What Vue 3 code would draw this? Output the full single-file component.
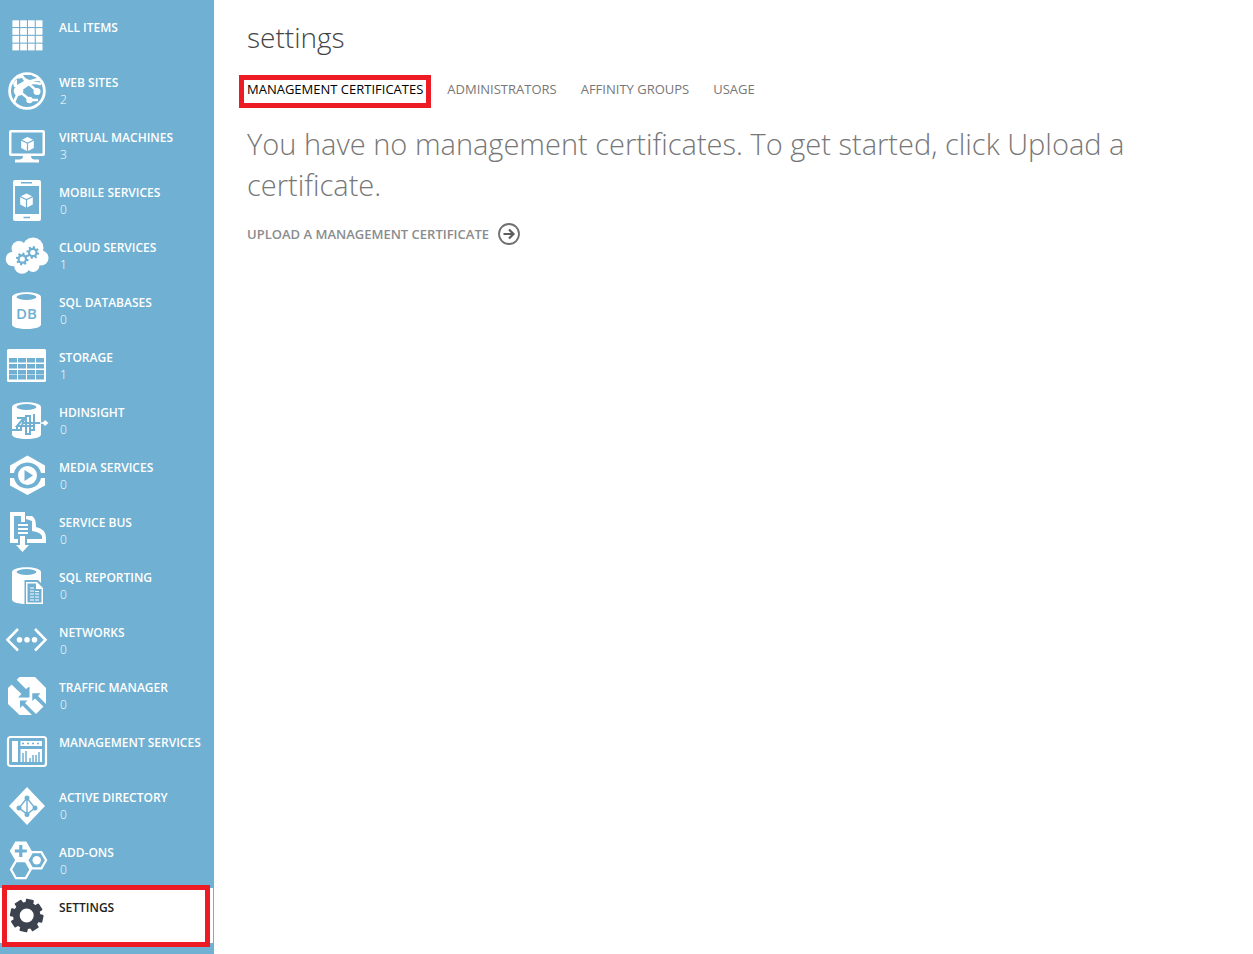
<script setup>
const B = '#70b0d2'
const cube = (x, y) =>
  `<g transform="translate(${x} ${y})"><path d="M0-7 5.6-4.2 0-1.4-5.6-4.2Z"/><path d="M-6.3-3.2-.6-.4V6.9L-6.3 4Z"/><path d="M6.3-3.2.6-.4V6.9L6.3 4Z"/></g>`
const teeth = (n, r, w, h) =>
  Array.from({ length: n }, (_, i) => `<rect x="${-w / 2}" y="${-r}" width="${w}" height="${h}" rx="${w / 8}" transform="rotate(${(i * 360) / n + 12})"/>`).join('')
const smallGear = (x, y) =>
  `<g transform="translate(${x} ${y})" fill="${B}">${teeth(8, 6.4, 2.2, 3)}<circle r="3.7" fill="none" stroke="${B}" stroke-width="2.2"/></g>`
const grid = [0, 1, 2, 3]
  .map((r) => [0, 1, 2, 3].map((c) => `<rect x="${7.4 + c * 7.8}" y="${6.3 + r * 7.8}" width="6.7" height="6.7"/>`).join(''))
  .join('')
const drum = `<path d="M7 8C7 1.500 36 1.500 36 8V35.500C36 41.500 7 41.500 7 35.500Z"/><ellipse cx="21.500" cy="8" rx="10" ry="2.900" fill="${B}"/>`
const hex = (x, y, r) =>
  [0, 60, 120, 180, 240, 300].map((a) => `${(x + r * Math.cos((a * Math.PI) / 180)).toFixed(1)},${(y + r * Math.sin((a * Math.PI) / 180)).toFixed(1)}`).join(' ')

const items = [
  { label: 'ALL ITEMS', icon: grid },
  {
    label: 'WEB SITES',
    count: 2,
    icon: `<circle cx="22" cy="22" r="17.400" fill="none" stroke="currentColor" stroke-width="2.800"/>
      <path fill="none" stroke="currentColor" stroke-width="2.600" d="M14 22 32 9M14 22 25 31M17 7Q23 15 32 22M14 22 9 33M25 31 33 31M36 15Q24 12 15 18"/>
      <path d="M17 5 32 7 35 12 23 13 16 18 9 18 8 14Z" /><path fill="${B}" d="M18 6Q20 10 25 11L32 9 26 6ZM12 10 17 9 19 12 12 16Z"/>
      <circle cx="13.500" cy="22" r="4.800"/><circle cx="32" cy="22.500" r="3.500"/><circle cx="24.500" cy="31" r="3.200"/>`
  },
  {
    label: 'VIRTUAL MACHINES',
    count: 3,
    icon: `<path fill-rule="evenodd" d="M6 6H38Q40 6 40 8V30Q40 32 38 32H6Q4 32 4 30V8Q4 6 6 6ZM6.500 8.500V29.500H37.500V8.500Z"/><path d="M18 32H26Q26 35.500 30 35.500H34V38.500H10V35.500H14Q18 35.500 18 32Z"/>${cube(22.5, 20)}`
  },
  {
    label: 'MOBILE SERVICES',
    count: 0,
    icon: `<path fill-rule="evenodd" d="M10 1H34Q36 1 36 3V40Q36 42 34 42H10Q8 42 8 40V3Q8 1 10 1ZM10 7V35H34V7Z"/><path stroke="${B}" stroke-width="1.600" d="M16 3.800H27M18.500 38.500H25"/>${cube(21.5, 21.5)}`
  },
  {
    label: 'CLOUD SERVICES',
    count: 1,
    icon: `<circle cx="28" cy="14" r="10.500"/><circle cx="14" cy="14.500" r="7.500"/><circle cx="8" cy="25" r="7.300"/><circle cx="17" cy="32" r="7.800"/><circle cx="28" cy="31.500" r="6.500"/><circle cx="36" cy="24" r="7.500"/><path d="M8 18H36V31H8Z"/>${smallGear(17.3, 25)}${smallGear(27.8, 18.5)}`
  },
  {
    label: 'SQL DATABASES',
    count: 0,
    icon: `${drum}<text x="21.500" y="30" fill="${B}" text-anchor="middle" font-size="15" font-weight="600">DB</text>`
  },
  {
    label: 'STORAGE',
    count: 1,
    icon: `<rect x="2" y="5" width="39" height="33" rx="1.500"/><path fill="${B}" d="${[14, 20, 26, 31].map((y) => [4, 13, 22, 31].map((x) => `M${x} ${y}h8v4.500h-8z`).join('')).join('')}"/>`
  },
  {
    label: 'HDINSIGHT',
    count: 0,
    icon: `${drum}<path fill="none" stroke="${B}" stroke-width="2" d="M7 31H16V27H29V31H25V35H21V17H25V31M12 19H19L12 27H17M20 18 16 29M29 15V27M12 31V27M36 24H17"/><path stroke="currentColor" stroke-width="1.600" d="M35 24H40"/><path d="M40 21 43.500 24 40 27 37.500 24Z"/>`
  },
  {
    label: 'MEDIA SERVICES',
    count: 0,
    icon: `<path d="M22.500 1.500 40 11.500V19H36C33 5 12 5 9 19H5V11.500ZM5 24H9C12 38 33 38 36 24H40V31.500L22.500 41 5 31.500Z"/><path fill-rule="evenodd" d="M22.500 12A9.500 9.500 0 1 0 22.500 31 9.500 9.500 0 1 0 22.500 12ZM19.500 16 28 21.500 19.500 27Z"/>`
  },
  {
    label: 'SERVICE BUS',
    count: 0,
    icon: `<path fill="none" stroke="currentColor" stroke-width="4" d="M13 32H7V5H18V13"/><path fill-rule="evenodd" d="M21 7H27Q31 9 31 18Q41 20 41 29V34H22V30H37V27Q35 23 27 22V12L21 10Z"/><path d="M13 15H23V17H13ZM13 19H23V21H13ZM13 23H23V25H13ZM15 27H20V36H24L17.500 43 11 36H15Z"/>`
  },
  {
    label: 'SQL REPORTING',
    count: 0,
    icon: `${drum}<path fill="${B}" d="M19.500 16H33L39 22V41H19.500Z"/><path fill-rule="evenodd" d="M21 18H32L38 24V40H21ZM22.500 19.500V38.500H36.500V25H31V19.500Z"/><path stroke="currentColor" stroke-width="1.200" d="M25 24H29M25 27H29M25 30H29M25 33H29M25 36H29M30 27.500H34M30 30H34M30 33H34M30 36H34"/>`
  },
  {
    label: 'NETWORKS',
    count: 0,
    icon: `<path fill="none" stroke="currentColor" stroke-width="2.600" d="M13 10 2.500 20.800 13 31.500M30 10 40.500 20.800 30 31.500"/><circle cx="14.500" cy="20.800" r="2.800"/><circle cx="22" cy="20.800" r="2.800"/><circle cx="29.500" cy="20.800" r="2.800"/>`
  },
  {
    label: 'TRAFFIC MANAGER',
    count: 0,
    icon: `<path d="M14.500 3H30L41 14V30L30 41H14.500L3 30V14Z"/><path fill="${B}" d="M6 10 11 5 21 15 24.500 12.500V23.500H13L16.500 20ZM27.300 19.300H35.500L33 22 42 31V36L30 24.500 27.300 27ZM15 26.500H22.500L20 29 33 42H28L17.500 31.500 15 34Z"/>`
  },
  {
    label: 'MANAGEMENT SERVICES',
    icon: `<rect x="3" y="8" width="38" height="29" rx="2.500" fill="none" stroke="currentColor" stroke-width="2.200"/><path d="M7 12H13V33H7ZM15.500 12H37V17H15.500ZM15.500 20H37V33H15.500Z"/><path stroke="${B}" stroke-width="1.500" d="M17 14.500H19M22 14.500H24M27 14.500H29M32 14.500H34M18 33V24M21 33V22M25 33V29M28 33V26M31 33V26M34 33V23"/>`
  },
  {
    label: 'ACTIVE DIRECTORY',
    count: 0,
    icon: `<path d="M22 3 40 22 22 41 4 22Z"/><g fill="${B}" stroke="${B}" stroke-width="1.400"><path fill="none" d="M22 14 14 24 22 30 30 24ZM22 14V30"/><circle cx="22" cy="14" r="1.800"/><circle cx="14" cy="24" r="1.800"/><circle cx="30" cy="24" r="1.800"/><circle cx="22" cy="30.500" r="1.800"/></g>`
  },
  {
    label: 'ADD-ONS',
    count: 0,
    icon: `<polygon points="${hex(15.8, 12, 11)}"/><path stroke="${B}" stroke-width="3.200" d="M15.800 6V18M9.800 12H21.800"/><g fill="none" stroke="currentColor" stroke-width="2.200"><polygon points="${hex(15.8, 30.6, 9.8)}"/><polygon points="${hex(31.7, 21.3, 9.4)}"/></g><circle cx="31.700" cy="21.300" r="4.200"/>`
  },
  {
    label: 'SETTINGS',
    active: true,
    icon: `<g transform="translate(21.700 21.500)">${teeth(8, 16.6, 8, 7)}<circle r="10.300" fill="none" stroke="currentColor" stroke-width="6.600"/></g>`
  }
]
const tabs = ['MANAGEMENT CERTIFICATES', 'ADMINISTRATORS', 'AFFINITY GROUPS', 'USAGE']
</script>

<template>
  <div class="page">
    <nav class="sidebar" aria-label="Services">
      <a v-for="item in items" :key="item.label" href="#" class="item" :class="{ active: item.active }">
        <svg class="icon" viewBox="0 0 44 44" fill="currentColor" aria-hidden="true" v-html="item.icon"></svg>
        <span class="info">
          <span class="label">{{ item.label }}</span>
          <span v-if="item.count !== undefined" class="count">{{ item.count }}</span>
        </span>
      </a>
    </nav>
    <main class="content">
      <h1>settings</h1>
      <nav class="tabs" aria-label="Settings sections">
        <a v-for="(tab, i) in tabs" :key="tab" href="#" class="tab" :class="{ current: i === 0 }">{{ tab }}</a>
      </nav>
      <p class="message">You have no management certificates. To get started, click Upload a certificate.</p>
      <button type="button" class="upload">
        <span>UPLOAD A MANAGEMENT CERTIFICATE</span>
        <svg class="arrow" viewBox="0 0 24 24" fill="none" aria-hidden="true">
          <circle cx="12" cy="12" r="10" stroke="#707070" stroke-width="1.800" />
          <path d="M6.500 12H16M12 7.500 16.500 12 12 16.500" stroke="#5c5c5c" stroke-width="2.200" />
        </svg>
      </button>
    </main>
  </div>
</template>

<style>
body {
  background: #fff;
}
</style>

<style scoped>
.page {
  display: flex;
  min-height: 100vh;
  font-family: "Open Sans", "Noto Sans", sans-serif;
}
.sidebar {
  box-sizing: border-box;
  flex: 0 0 214px;
  padding: 8px 1px 8px 0;
  background: #70b0d2;
}
.item {
  position: relative;
  display: flex;
  box-sizing: border-box;
  min-height: 55px;
  padding: 6px 0 5px 5px;
  gap: 10px;
  color: #fff;
  text-decoration: none;
}
.icon {
  flex: none;
  width: 44px;
  height: 44px;
}
.info {
  display: flex;
  flex-direction: column;
  padding-top: 5px;
  font-size: 12px;
  line-height: 17px;
  white-space: nowrap;
}
.label {
  font-weight: 600;
}
.count {
  padding-left: 1px;
  font-weight: 300;
}
.active {
  background: #fff;
  color: #3c434f;
}
.active .label {
  color: #222;
}
.active::after {
  content: "";
  position: absolute;
  inset: -3px 3px -4px 2px;
  border: 5px solid #ed1c24;
}
.content {
  flex: 1;
  min-width: 0;
  padding: 16px 33px;
}
h1 {
  margin: 0;
  color: #444;
  font-size: 28px;
  font-weight: 300;
  line-height: 42px;
}
.tabs {
  display: flex;
  gap: 24px;
  margin-top: 20px;
}
.tab {
  position: relative;
  color: #777;
  font-size: 13px;
  line-height: 22px;
  text-decoration: none;
  white-space: nowrap;
}
.current {
  color: #000;
}
.current::after {
  content: "";
  position: absolute;
  inset: -3px -8px -8px -8px;
  border: 5px solid #ed1c24;
}
.message {
  margin: 23px 0 0;
  color: #777;
  font-size: 29px;
  font-weight: 300;
  line-height: 41px;
}
.upload {
  display: flex;
  align-items: center;
  gap: 8px;
  margin-top: 17px;
  padding: 0;
  border: 0;
  background: none;
  color: #8a8c8e;
  font: inherit;
  font-size: 13px;
  font-weight: 600;
  line-height: 24px;
}
.arrow {
  width: 24px;
  height: 24px;
}
</style>
